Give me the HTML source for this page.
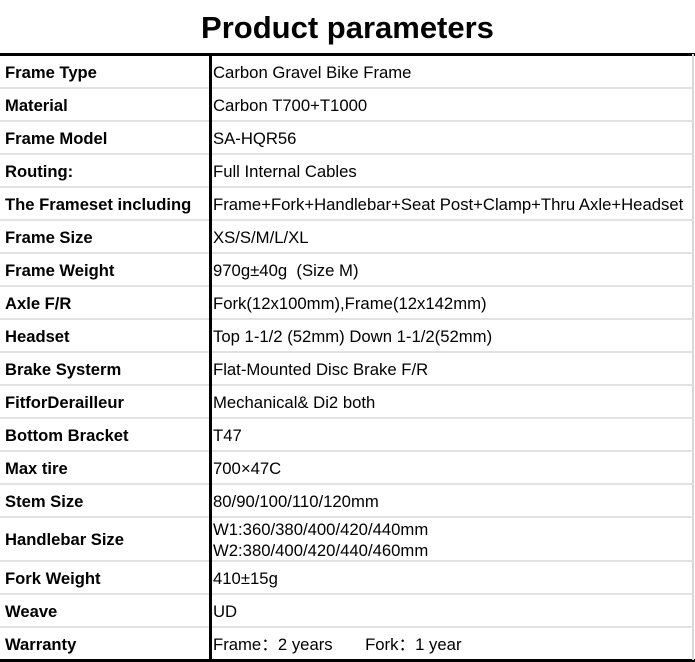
<!DOCTYPE html>
<html><head><meta charset="utf-8"><style>
*{margin:0;padding:0;box-sizing:border-box}
body{width:695px;height:662px;background:#fff;position:relative;overflow:hidden;font-family:"Liberation Sans","Noto Sans CJK SC",sans-serif;color:#000}
.t{position:absolute;left:0;top:0;width:695px;height:54px;text-align:center;font-weight:bold;font-size:31px;line-height:56px}
.h{position:absolute;left:0;width:695px;background:#000}
.g{position:absolute;left:0;width:693px;height:2px;background:#e2e2e2}
.v{position:absolute;top:54px;left:209px;width:3px;height:608px;background:#000}
.r{position:absolute;top:54px;left:692px;width:2px;height:606px;background:#d8d8d8}
.l{position:absolute;left:5px;font-weight:bold;font-size:16.6px;white-space:nowrap;line-height:19px}
.c{position:absolute;left:213px;font-size:16.7px;white-space:nowrap;width:480px;overflow:hidden;line-height:19px}
</style></head><body>
<div class="t">Product parameters</div>
<div class="h" style="top:53px;height:3px"></div>
<div class="h" style="top:659px;height:3px"></div>
<div class="r"></div>
<div class="g" style="top:87px"></div><div class="g" style="top:120px"></div><div class="g" style="top:153px"></div><div class="g" style="top:186px"></div><div class="g" style="top:219px"></div><div class="g" style="top:252px"></div><div class="g" style="top:285px"></div><div class="g" style="top:318px"></div><div class="g" style="top:351px"></div><div class="g" style="top:384px"></div><div class="g" style="top:417px"></div><div class="g" style="top:450px"></div><div class="g" style="top:483px"></div><div class="g" style="top:516px"></div><div class="g" style="top:560px"></div><div class="g" style="top:593px"></div><div class="g" style="top:626px"></div>
<div class="v"></div>
<div class="l" style="top:63px">Frame Type</div><div class="c" style="top:63px">Carbon Gravel Bike Frame</div>
<div class="l" style="top:96px">Material</div><div class="c" style="top:96px">Carbon T700+T1000</div>
<div class="l" style="top:129px">Frame Model</div><div class="c" style="top:129px">SA-HQR56</div>
<div class="l" style="top:162px">Routing:</div><div class="c" style="top:162px">Full Internal Cables</div>
<div class="l" style="top:195px">The Frameset including</div><div class="c" style="top:195px">Frame+Fork+Handlebar+Seat Post+Clamp+Thru Axle+Headset</div>
<div class="l" style="top:228px">Frame Size</div><div class="c" style="top:228px">XS/S/M/L/XL</div>
<div class="l" style="top:261px">Frame Weight</div><div class="c" style="top:261px">970g±40g &nbsp;(Size M)</div>
<div class="l" style="top:294px">Axle F/R</div><div class="c" style="top:294px">Fork(12x100mm),Frame(12x142mm)</div>
<div class="l" style="top:327px">Headset</div><div class="c" style="top:327px">Top 1-1/2 (52mm) Down 1-1/2(52mm)</div>
<div class="l" style="top:360px">Brake Systerm</div><div class="c" style="top:360px">Flat-Mounted Disc Brake F/R</div>
<div class="l" style="top:393px">FitforDerailleur</div><div class="c" style="top:393px">Mechanical&amp; Di2 both</div>
<div class="l" style="top:426px">Bottom Bracket</div><div class="c" style="top:426px">T47</div>
<div class="l" style="top:459px">Max tire</div><div class="c" style="top:459px">700×47C</div>
<div class="l" style="top:492px">Stem Size</div><div class="c" style="top:492px">80/90/100/110/120mm</div>
<div class="l" style="top:530px">Handlebar Size</div><div class="c" style="top:519px;line-height:21px">W1:360/380/400/420/440mm<br>W2:380/400/420/440/460mm</div>
<div class="l" style="top:569px">Fork Weight</div><div class="c" style="top:569px">410±15g</div>
<div class="l" style="top:602px">Weave</div><div class="c" style="top:602px">UD</div>
<div class="l" style="top:635px">Warranty</div><div class="c" style="top:635px">Frame：2 years&nbsp;&nbsp;&nbsp;&nbsp;&nbsp;&nbsp;&nbsp;Fork：1 year</div>
</body></html>
